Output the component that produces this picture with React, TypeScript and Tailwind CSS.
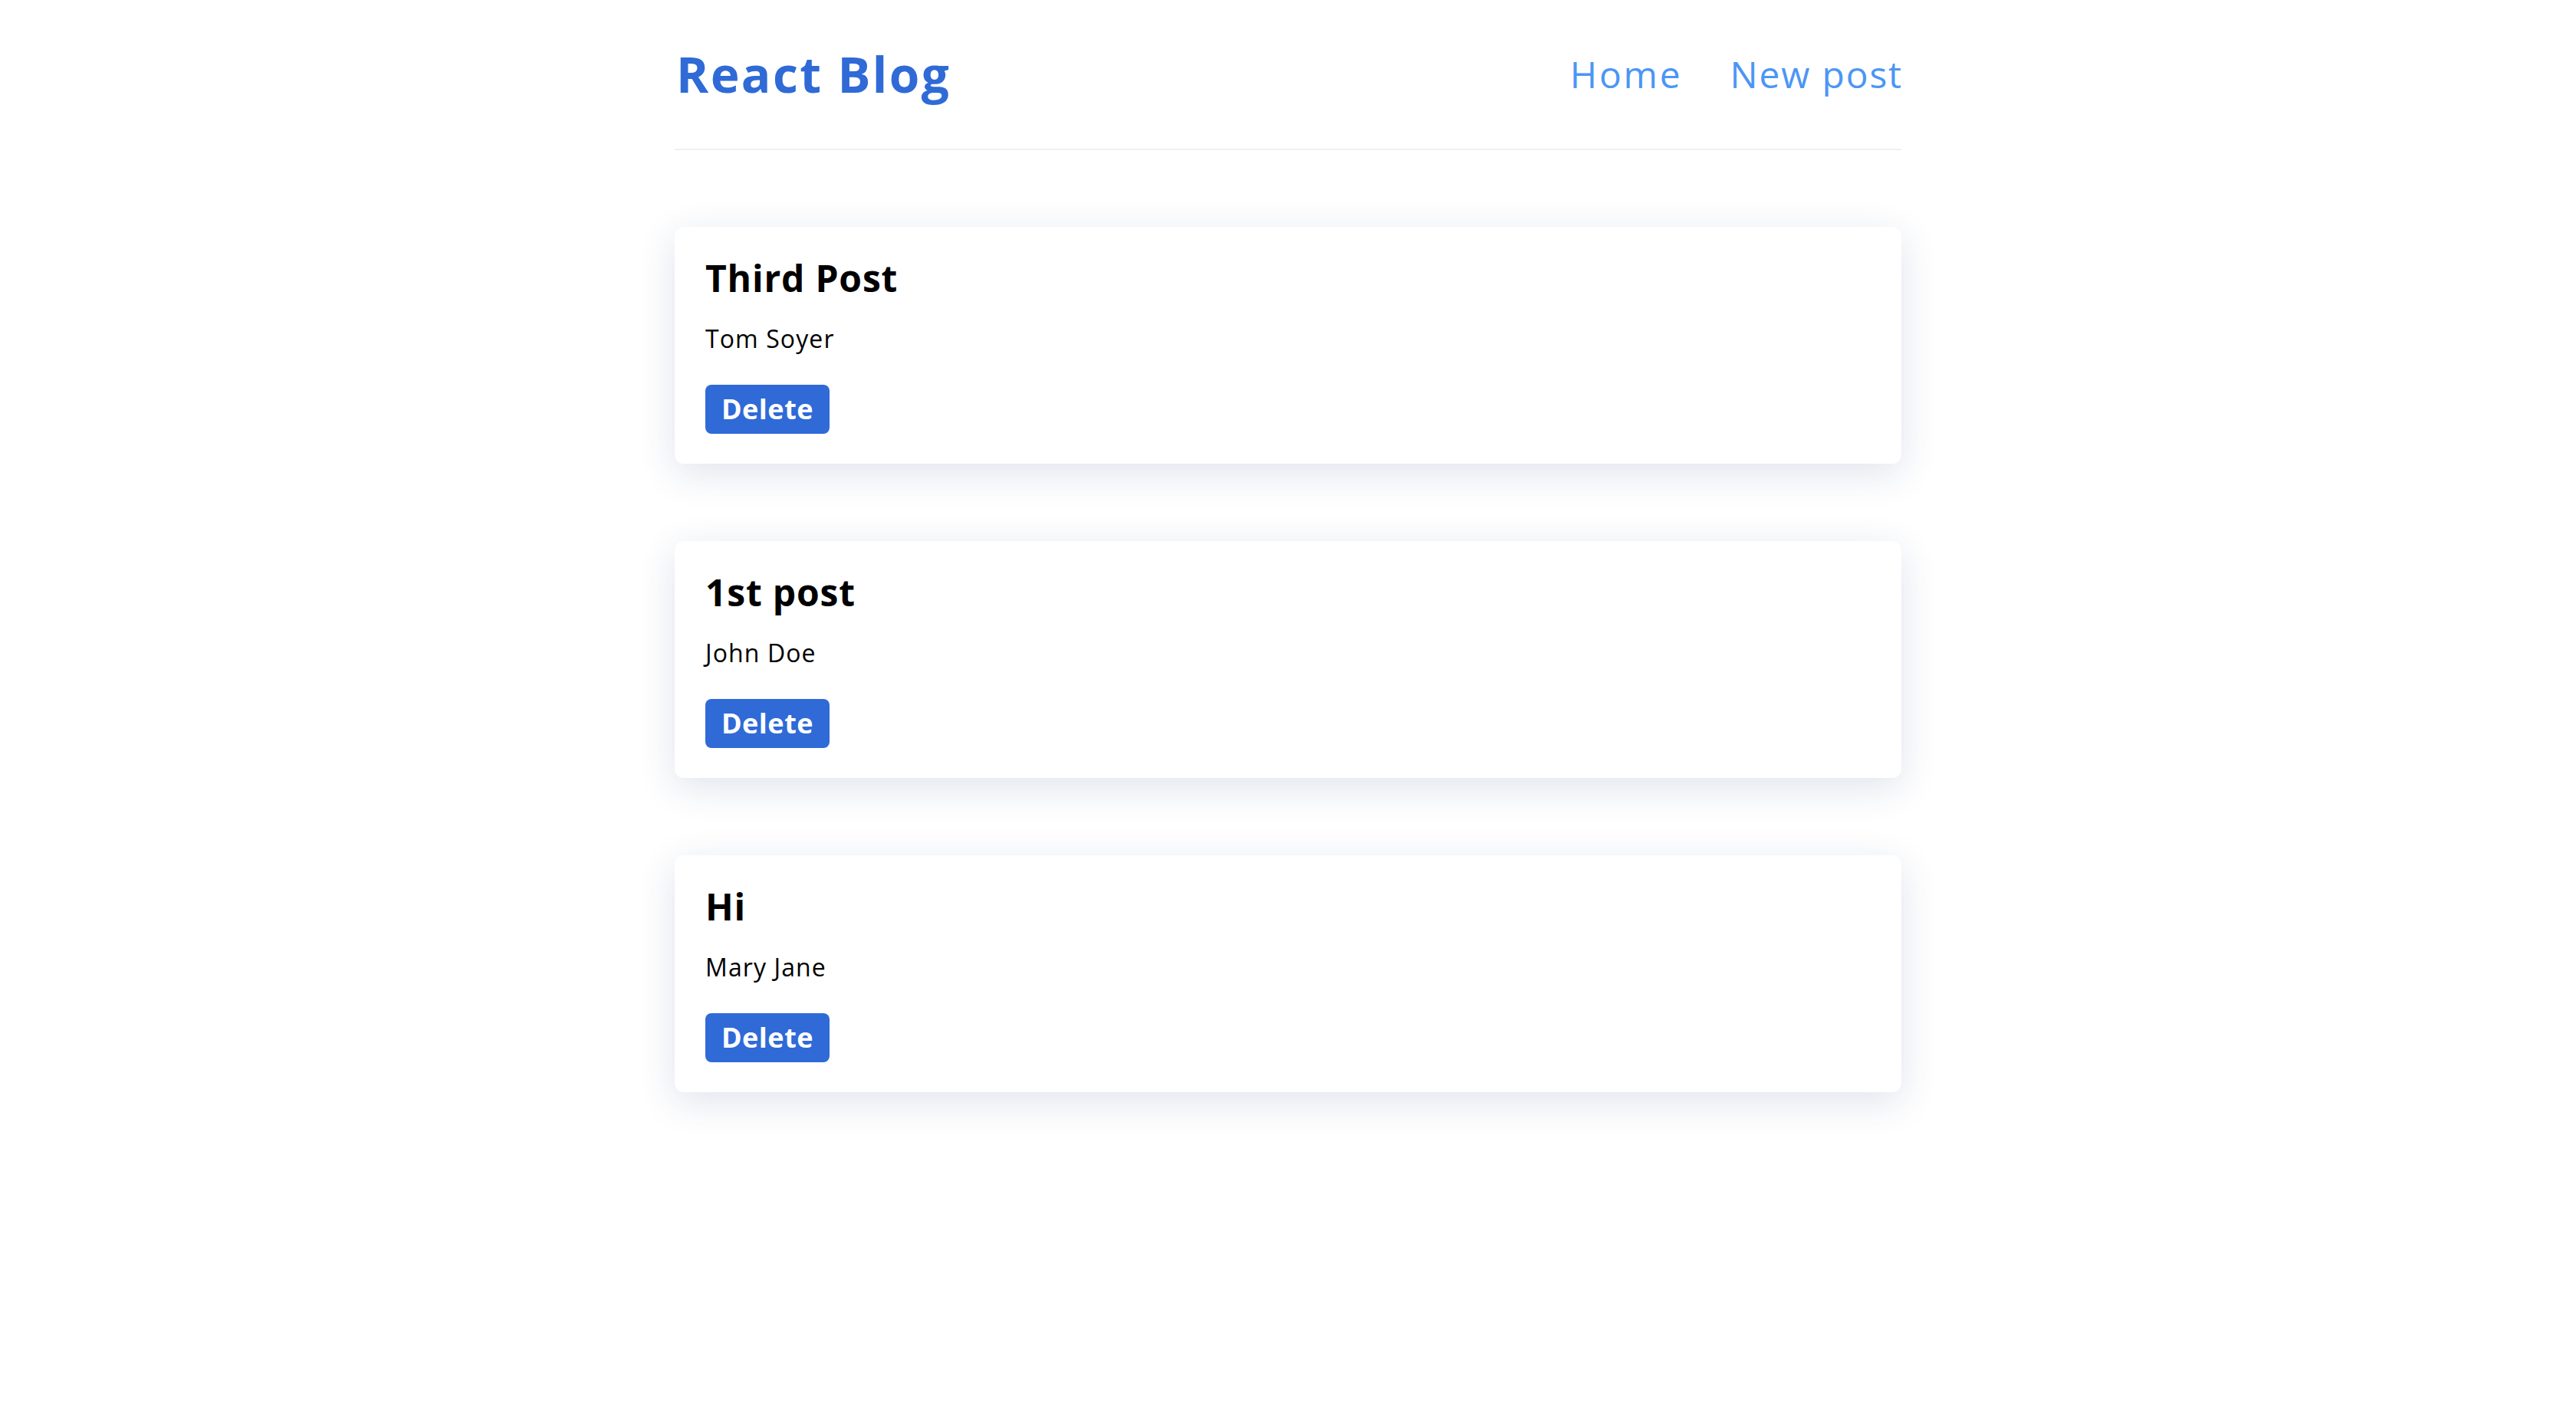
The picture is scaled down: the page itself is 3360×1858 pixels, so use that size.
import React from "react";

const posts = [
  { title: "Third Post", author: "Tom Soyer" },
  { title: "1st post", author: "John Doe" },
  { title: "Hi", author: "Mary Jane" },
];

export default function App() {
  return (
    <div className="min-h-screen bg-white font-['Open_Sans',sans-serif] text-black">
      <div className="w-[1600px] mx-auto">
        <header className="h-[196px] flex items-center justify-between border-b-2 border-[#f0f0f0]">
          <h1 className="ml-[2px] text-[64px] leading-none font-bold text-[#2f6ad7] tracking-[2.4px]">React Blog</h1>
          <nav className="flex items-center gap-[62px]">
            <a className="text-[48px] leading-none text-[#4b96f5] tracking-[2.8px]">Home</a>
            <a className="text-[48px] leading-none text-[#4b96f5] tracking-[1.8px] -mr-[2px]">New post</a>
          </nav>
        </header>
        <main className="flex flex-col gap-[101px] pt-[100px]">
          {posts.map((p) => (
            <div
              key={p.title}
              className="bg-white rounded-[12px] shadow-[0_12px_50px_rgba(30,60,120,0.14)] px-[40px] pt-[38px] pb-[39px] flex flex-col items-start"
            >
              <h2 className="text-[48px] leading-[58px] font-bold tracking-[0.8px]">{p.title}</h2>
              <p className="text-[32px] leading-[40px] mt-[30px] tracking-[1.1px]">{p.author}</p>
              <button className="mt-[40px] h-[64px] w-[162px] rounded-[8px] bg-[#2f6ad7] text-white text-[36px] font-bold leading-none tracking-[0.5px] flex items-center justify-center">
                Delete
              </button>
            </div>
          ))}
        </main>
      </div>
    </div>
  );
}
